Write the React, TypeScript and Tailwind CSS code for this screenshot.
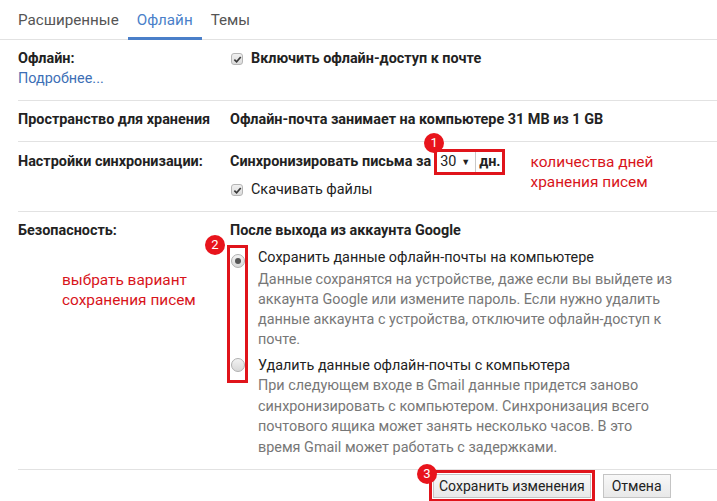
import React from "react";

function Check() {
  return (
    <span className="inline-flex w-[12px] h-[12px] rounded-[3px] border border-[#b5b5b5] bg-gradient-to-b from-[#f0f0f0] to-[#dcdcdc] items-center justify-center shrink-0">
      <svg width="9" height="9" viewBox="0 0 10 10">
        <path d="M1.5 5.2 L4 7.6 L8.6 2.2" fill="none" stroke="#3a3a3a" strokeWidth="1.9" />
      </svg>
    </span>
  );
}

function Radio({ on }: { on?: boolean }) {
  return (
    <span className="inline-flex w-[14px] h-[14px] rounded-full border border-[#b0b0b0] bg-gradient-to-b from-[#f2f2f2] to-[#d8d8d8] items-center justify-center shrink-0">
      {on && <span className="w-[6px] h-[6px] rounded-full bg-[#555]" />}
    </span>
  );
}

function Badge({ n, className }: { n: string; className: string }) {
  return (
    <span
      className={
        "absolute w-[20px] h-[20px] rounded-full bg-[#e8141c] text-white text-[13px] leading-[20px] text-center font-['Roboto'] font-normal z-10 " +
        className
      }
    >
      {n}
    </span>
  );
}

export default function App() {
  return (
    <div className="w-[717px] h-[501px] bg-white overflow-hidden font-['Roboto',sans-serif] text-[14.4px] leading-[20px] text-[#222]">
      {/* Tabs */}
      <div className="flex h-[40px] border-b border-[#e2e2e2] pl-[9px]">
        <div className="px-[9px] pt-[10px] text-[15.2px] text-[#555]">Расширенные</div>
        <div className="px-[9px] pt-[10px] text-[15.2px] text-[#4a7fc9] border-b-[3px] border-[#4a7fc9] -mb-px">Офлайн</div>
        <div className="px-[9px] pt-[10px] text-[15.2px] text-[#555]">Темы</div>
      </div>

      <div className="pl-[18px]">
        {/* Row 1 */}
        <div className="flex border-b border-[#e2e2e2] pt-[9px] pb-[11px]">
          <div className="w-[212px] shrink-0">
            <div className="font-bold">Офлайн:</div>
            <div className="text-[#3d6fb6]">Подробнее...</div>
          </div>
          <div className="flex items-center gap-[8px] h-[20px] pl-[1px]">
            <Check />
            <span className="font-bold">Включить офлайн-доступ к почте</span>
          </div>
        </div>

        {/* Row 2 */}
        <div className="flex border-b border-[#e2e2e2] pt-[9px] pb-[11px]">
          <div className="w-[212px] shrink-0 font-bold">Пространство для хранения</div>
          <div className="font-bold">Офлайн-почта занимает на компьютере 31 MB из 1 GB</div>
        </div>

        {/* Row 3 */}
        <div className="flex border-b border-[#e2e2e2] pt-[10px] pb-[11px]">
          <div className="w-[212px] shrink-0 font-bold">Настройки синхронизации:</div>
          <div className="flex-1">
            <div className="flex items-start">
              <div className="flex items-center h-[20px]">
                <span className="font-bold">Синхронизировать письма за</span>
                <span className="relative ml-[6px] inline-flex items-center h-[20px] outline-[3px] outline-solid outline-[#e0141b]">
                  <Badge n="1" className="-left-[13px] -top-[19px]" />
                  <span className="flex items-center h-full pl-[3px] pr-[5px] border-r border-[#c8c8c8] gap-[5px]">
                    <span>30</span>
                    <span className="text-[9px]">▼</span>
                  </span>
                  <span className="font-bold pl-[3px] pr-[1px]">дн.</span>
                </span>
              </div>
              <div className="ml-[29px] text-[15.4px] leading-[20px] text-[#d8141b]">
                <div>количества дней</div>
                <div>хранения писем</div>
              </div>
            </div>
            <div className="flex items-center gap-[8px] mt-[-12px] pl-[1px] h-[20px]">
              <Check />
              <span>Скачивать файлы</span>
            </div>
          </div>
        </div>

        {/* Row 4 */}
        <div className="flex border-b border-[#e2e2e2] pt-[9px] pb-[10px]">
          <div className="w-[212px] shrink-0">
            <div className="font-bold">Безопасность:</div>
            <div className="mt-[29px] pl-[44px] text-[15.4px] leading-[20px] text-[#d8141b]">
              <div>выбрать вариант</div>
              <div>сохранения писем</div>
            </div>
          </div>
          <div className="relative flex-1">
            <div className="font-bold">После выхода из аккаунта Google</div>
            <span className="absolute left-[-3px] top-[24px] w-[21px] h-[138px] border-[3px] border-[#e0141b]" />
            <Badge n="2" className="left-[-25px] top-[14px]" />
            <div className="flex mt-[7px]">
              <div className="w-[28px] pl-[1px] pt-[2px]">
                <Radio on />
              </div>
              <div>
                <div>Сохранить данные офлайн-почты на компьютере</div>
                <div className="text-[#777] mt-[2px] w-[420px]">
                  Данные сохранятся на устройстве, даже если вы выйдете из аккаунта Google или измените пароль. Если нужно удалить данные аккаунта с устройства, отключите офлайн-доступ к почте.
                </div>
              </div>
            </div>
            <div className="flex mt-[6px]">
              <div className="w-[28px] pl-[1px] pt-[2px]">
                <Radio />
              </div>
              <div>
                <div>Удалить данные офлайн-почты с компьютера</div>
                <div className="text-[#777] leading-[20.7px] w-[420px]">
                  При следующем входе в Gmail данные придется заново синхронизировать с компьютером. Синхронизация всего почтового ящика может занять несколько часов. В это время Gmail может работать с задержками.
                </div>
              </div>
            </div>
          </div>
        </div>

        {/* Buttons */}
        <div className="flex pt-[4px] pl-[415px] gap-[12px]">
          <div className="relative outline-[3px] outline-solid outline-[#e0141b] outline-offset-[1px]">
            <Badge n="3" className="-left-[16px] -top-[10px]" />
            <button className="h-[24px] px-[5px] text-[14px] leading-[22px] text-[#222] border border-[#c4c4c4] bg-gradient-to-b from-[#f8f8f8] to-[#e8e8e8]">
              Сохранить изменения
            </button>
          </div>
          <button className="h-[24px] px-[8px] text-[14px] leading-[22px] text-[#222] border border-[#c4c4c4] bg-gradient-to-b from-[#f8f8f8] to-[#e8e8e8]">
            Отмена
          </button>
        </div>
      </div>
    </div>
  );
}
